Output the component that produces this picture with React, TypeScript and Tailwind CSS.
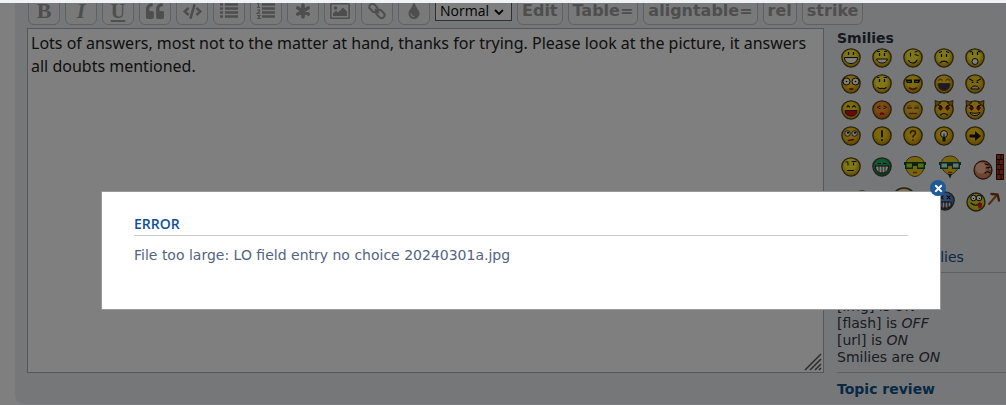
import { useState, type ReactNode } from "react";
import { FaCode, FaQuoteLeft, FaTint, FaTimes } from "react-icons/fa";

const INK = "#1c1400";

// Toolbar glyphs with heavier strokes than the icon package offers.
function ListIcon({ ordered = false }: { ordered?: boolean }) {
  return (
    <svg viewBox="0 0 20 18" className="h-[18px] w-5" fill="none" stroke="currentColor" aria-hidden>
      <path d="M6 2.500h13M6 6.500h13M6 10.500h13M6 14.500h13" strokeWidth="2.500" />
      {ordered ? (
        <path d="M1 1.500h1.500v4M1 5.500h3M1 8h2.500v1.500L1 11.500h3M1 13.500h3l-1.500 1.500 1.500 1.500H1" strokeWidth="1.200" />
      ) : (
        <path d="M1 2.500h3M1 6.500h3M1 10.500h3M1 14.500h3" strokeWidth="2.500" />
      )}
    </svg>
  );
}

function AsteriskIcon() {
  return (
    <svg viewBox="0 0 16 16" className="h-4 w-4" aria-hidden>
      <path d="M8 2v12M2.800 5l10.400 6M13.200 5L2.800 11" stroke="currentColor" strokeWidth="3.600" strokeLinecap="round" />
    </svg>
  );
}

function PictureIcon() {
  return (
    <svg viewBox="0 0 20 16" className="h-4 w-5" aria-hidden>
      <rect x=".8" y=".8" width="18.400" height="14.400" rx=".8" fill="none" stroke="currentColor" strokeWidth="1.500" />
      <circle cx="5.500" cy="5" r="1.800" fill="currentColor" />
      <path d="M3 13v-2.500l3-3 2 2 5-5 4 4V13Z" fill="currentColor" />
    </svg>
  );
}

function ChainIcon() {
  return (
    <svg viewBox="0 0 18 18" className="h-[18px] w-[18px]" fill="none" stroke="currentColor" strokeWidth="2" aria-hidden>
      <rect x="1" y="3" width="9" height="6" rx="3" transform="rotate(45 5.500 6)" />
      <rect x="8" y="9" width="9" height="6" rx="3" transform="rotate(45 12.500 12)" />
      <path d="M7 7l4 4" />
    </svg>
  );
}

const FORMAT_BUTTONS: { label: string; icon: ReactNode }[] = [
  { label: "Bold", icon: <span className="font-['Liberation_Serif',serif] text-[22px] font-bold">B</span> },
  { label: "Italic", icon: <span className="font-['Liberation_Serif',serif] text-[22px] font-bold italic">I</span> },
  { label: "Underline", icon: <span className="font-['Liberation_Serif',serif] text-xl font-bold underline underline-offset-2">U</span> },
  { label: "Quote", icon: <FaQuoteLeft size={18} /> },
  { label: "Code", icon: <FaCode size={19} /> },
  { label: "List", icon: <ListIcon /> },
  { label: "Ordered list", icon: <ListIcon ordered /> },
  { label: "List item", icon: <AsteriskIcon /> },
  { label: "Image", icon: <PictureIcon /> },
  { label: "Link", icon: <ChainIcon /> },
  { label: "Font colour", icon: <FaTint size={16} /> }
];

const CUSTOM_TAGS = ["Edit", "Table=", "aligntable=", "rel", "strike"];

// Every face shares the same head; the children are its features.
function Face({
  from = "#fff030",
  to = "#b98a00",
  size = "h-5 w-5",
  label,
  children
}: {
  from?: string;
  to?: string;
  size?: string;
  label: string;
  children?: ReactNode;
}) {
  const id = `head-${label}`;
  return (
    <svg viewBox="0 0 20 20" className={size} role="img" aria-label={label}>
      <defs>
        <radialGradient id={id} cx="46%" cy="38%" r="62%">
          <stop offset="0.450" stopColor={from} />
          <stop offset="1" stopColor={to} />
        </radialGradient>
      </defs>
      <path
        d="M10 .8C15 .8 19.200 4.300 19.200 9.200C19.200 14.500 14.600 19.200 10 19.200C5.400 19.200 .8 14.500 .8 9.200C.8 4.300 5 .8 10 .8Z"
        fill={`url(#${id})`}
        stroke="#54431c"
        strokeWidth="1.300"
      />
      {children}
    </svg>
  );
}

function Eyes({ y = 5 }: { y?: number }) {
  return (
    <path d={`M7.500 ${y}v3M12.500 ${y}v3`} stroke={INK} strokeWidth="1.300" fill="none" />
  );
}

function Stroke({ d, color = INK, width = 1.1 }: { d: string; color?: string; width?: number }) {
  return <path d={d} stroke={color} strokeWidth={width} fill="none" strokeLinecap="round" />;
}

function Horns() {
  return <path d="M1 .5l6 2-5.500 4ZM19 .5l-6 2 5.500 4Z" fill="#b98310" stroke={INK} strokeWidth=".7" />;
}

function RedEyes() {
  return (
    <>
      <path d="M6.500 5.500l2 2.500-2 2.500-2-2.500ZM13.500 5.500l2 2.500-2 2.500-2-2.500Z" fill="#c00000" stroke="#500" strokeWidth=".7" />
      <Stroke d="M4.500 5l3 1.500M15.500 5l-3 1.500" />
    </>
  );
}

const SMILEY_ROWS: ReactNode[][] = [
  [
    <Face key="a" label="very-happy">
      <Eyes y={4} />
      <path d="M3.500 9.500h13c0 4-3 6-6.500 6s-6.500-2-6.500-6Z" fill="#fff" stroke={INK} />
    </Face>,
    <Face key="b" label="smile">
      <Eyes />
      <Stroke d="M5.500 3.500h2M12.500 3.500h2" />
      <path d="M4.500 11h11c-1 3-3 4-5.500 4S5.500 14 4.500 11Z" fill="#fff" stroke={INK} />
    </Face>,
    <Face key="c" label="wink">
      <Stroke d="M7.500 5v3M12 6.500l3 1M5.500 12.500c2 3.500 7 3.500 8.500-.5M12 4l2-.5" />
    </Face>,
    <Face key="d" label="sad">
      <Eyes y={6} />
      <Stroke d="M5.500 4.500l2-1M14.500 4.500l-2-1M6 15c2-2.500 6-2.500 8 0" />
    </Face>,
    <Face key="e" label="surprised">
      <Eyes y={4} />
      <Stroke d="M5 4l2-1M15 4l-2-1" />
      <circle cx="10" cy="13.500" r="3" fill="#fff" stroke={INK} />
    </Face>
  ],
  [
    <Face key="a" label="shock" from="#f5cf20">
      <circle cx="5.500" cy="7.500" r="3.500" fill="#fff" stroke={INK} />
      <circle cx="14.500" cy="7.500" r="3.500" fill="#fff" stroke={INK} />
      <circle cx="5.500" cy="7.500" r=".8" />
      <circle cx="14.500" cy="7.500" r=".8" />
      <Stroke d="M9 15h2.500" color="#c01800" width={1.8} />
    </Face>,
    <Face key="b" label="confused">
      <Eyes />
      <Stroke d="M5.500 3.500h1.500M12 3.500h2.500M6 13.500c2 2.500 3 0 5 1s2-.5 3-1" />
    </Face>,
    <Face key="c" label="cool" from="#f5d820">
      <path d="M2.500 5.500h6.500v3.500H4ZM11 5.500h6.500L16 9h-5Z" fill={INK} />
      <Stroke d="M5 7.500h2M12.500 7.500h2" color="#eee" width={0.5} />
      <Stroke d="M6.500 14c2 1.500 5 1.500 7 0" color="#a02000" width={1.6} />
    </Face>,
    <Face key="d" label="laughing" from="#f5cc28">
      <Stroke d="M4.500 6.500c1-2 3-2 3.500 0M12 6.500c1-2 3-2 3.500 0" color="#8a5a10" />
      <path d="M4 9.500h12c0 5-3 7-6 7s-6-2-6-7Z" fill="#3b3550" stroke="#6a4a10" />
    </Face>,
    <Face key="e" label="mad" from="#f5d020">
      <Stroke d="M4.500 5l3.500 2M15.500 5L12 7M7 8.500h1M12 8.500h1" />
      <path d="M6 15c0-4 8-4 8 0Z" fill="#ddd" stroke={INK} />
    </Face>
  ],
  [
    <Face key="a" label="razz" from="#f8d820">
      <Stroke d="M6 7l1-1.500L8.500 7M11.500 7l1.500-1.500L14.500 7" />
      <path d="M4 10.500h12c0 4-3 5.500-6 5.500s-6-1.500-6-5.500Z" fill="#d81010" stroke={INK} strokeWidth=".8" />
    </Face>,
    <Face key="b" label="embarrassed" from="#f8982c" to="#b86010">
      <Stroke d="M5.500 7.500L8 6M14.500 7.500L12 6M7 8.500h1M12 8.500h1" color="#5a2000" />
      <Stroke d="M8.500 14c1-1 2-1 3 0" color="#c01000" width={1.8} />
    </Face>,
    <Face key="c" label="crying" from="#eec02c">
      <Stroke d="M4.500 8h4M11.500 8h4M6.500 13.500h7" color="#9a4010" width={1.4} />
      <Stroke d="M4.500 6h3.500M12 6h3.500" color="#a08020" />
    </Face>,
    <Face key="d" label="evil" from="#f5cc20">
      <Horns />
      <RedEyes />
      <Stroke d="M6.500 15c2-2 5-2 7 0" />
    </Face>,
    <Face key="e" label="twisted" from="#f5cc20">
      <Horns />
      <RedEyes />
      <path d="M5 12.500c2 1 8 1 10 0-1 4-9 4-10 0Z" fill="#eee" stroke={INK} />
    </Face>
  ],
  [
    <Face key="a" label="rolling-eyes" from="#f5cc20">
      <circle cx="6.500" cy="7.500" r="2.800" fill="#eee" stroke="#4a3a20" />
      <circle cx="13.500" cy="7.500" r="2.800" fill="#eee" stroke="#4a3a20" />
      <circle cx="7" cy="6.800" r="1" />
      <circle cx="14" cy="6.800" r="1" />
      <Stroke d="M7.500 14.500c2-1 3 0 5-1" color="#a02000" width={1.4} />
    </Face>,
    <Face key="b" label="exclamation" from="#f8cc10">
      <Stroke d="M10 5v5.500M10 13.800v.4" width={1.8} />
    </Face>,
    <Face key="c" label="question" from="#f8cc10">
      <Stroke d="M7.500 7c0-3 5.500-3 5 0c0 2-2.500 2-2.500 4M10 14v.3" color="#5a3000" width={1.6} />
    </Face>,
    <Face key="d" label="idea" from="#f8cc10">
      <circle cx="10" cy="8" r="3.500" fill="#fff" stroke={INK} />
      <path d="M8.500 11.500h3v4h-3Z" fill={INK} />
      <Stroke d="M10 8v3" />
    </Face>,
    <Face key="e" label="arrow" from="#f8cc10">
      <path d="M4.500 8.500h5.500V5l6 5-6 5v-3.500H4.500Z" fill={INK} />
    </Face>
  ]
];

function GreenFace() {
  return (
    <Face label="mr-green" from="#1fb070" to="#0b6c42">
      <Stroke d="M6 6.500h2.500M11.500 6.500H14" />
      <path d="M3.500 9h13c0 5-3 7-6.500 7s-6.500-2-6.500-7Z" fill="#fff" stroke={INK} />
      <Stroke d="M7 9.500v5M10 9.500v6M13 9.500v5" width={0.8} />
    </Face>
  );
}

function GlassesFace({ beard = false }: { beard?: boolean }) {
  return (
    <svg viewBox="0 0 24 24" className="h-6 w-6" role="img" aria-label={beard ? "uber geek" : "geek"}>
      <path
        d={beard ? "M12 1c6 0 9 4 9 9 0 4-5 9-9 10-4-1-9-6-9-10 0-5 3-9 9-9Z" : "M12 1.500c6 0 9.500 4 9.500 9S17 21.500 12 21.500 2.500 16 2.500 10.500 6 1.500 12 1.500Z"}
        fill="#eec820"
        stroke="#6a5418"
      />
      <path
        d="M1 7h22v3h-1v4h-8v-3h-4v3H2v-4H1Z"
        fill={beard ? "#0c5440" : "#164818"}
      />
      <path d="M3.500 8.500h5.500v4H3.500ZM15 8.500h5.500v4h-5.500Z" fill={beard ? "#cfe8e8" : "#9ae030"} />
      <Stroke d="M10.500 17.500h3" color="#b04000" width={1.4} />
      {beard && <path d="M10 19h4l-2 4.500Z" fill="#222a3a" />}
    </svg>
  );
}

function WallFace() {
  return (
    <svg viewBox="0 0 31 26" className="h-[26px] w-[31px]" role="img" aria-label="brick wall">
      <circle cx="10" cy="16" r="9" fill="#e08860" stroke="#5a2a18" strokeWidth="1.300" />
      <circle cx="8" cy="14" r="5.500" fill="#ffbe98" />
      <Stroke d="M12 10l4 1M13 14l4-1M12 19c2-2 4-1 5 0" />
      <path d="M15 14.500l3-1v4Z" fill="#fff" stroke={INK} strokeWidth=".6" />
      <path d="M23.500 .5h7v25h-7Z" fill="#c43018" stroke={INK} />
      <path d="M23 5.500h7M23 10.500h7M23 15.500h7M23 20.500h7M28 0v5M26 5v5M28 10v5M26 15v5M28 20v6" stroke={INK} fill="none" />
    </svg>
  );
}

function BlueFace() {
  return (
    <Face label="dazed" from="#5a9af0" to="#2858b0">
      <Stroke d="M5 5l3 3M8 5L5 8M12 5l3 3M15 5l-3 3" />
      <path d="M4 11h12v4l-3 2H7l-3-2Z" fill="#dde8ff" stroke={INK} />
      <Stroke d="M7 11v5M10 11v6M13 11v5" />
    </Face>
  );
}

function PickFace() {
  return (
    <svg viewBox="0 0 35 24" className="h-6 w-[35px]" role="img" aria-label="pickaxe">
      <circle cx="11" cy="13" r="9" fill="#d8d028" stroke="#4a4010" strokeWidth="1.400" />
      <circle cx="8.500" cy="9" r="2.800" fill="#fff" stroke={INK} />
      <circle cx="14" cy="9" r="2.800" fill="#fff" stroke={INK} />
      <path d="M8 9h1v1H8ZM14 9h1v1h-1Z" />
      <Stroke d="M6 14c3 3 6 3 9 0" />
      <path d="M12 15l5-1v4l-3 2Z" fill="#e02010" />
      <Stroke d="M24 15L32 6" color="#a85a20" width={2} />
      <Stroke d="M26.500 5l6 .5 1.500 6" color="#7c3c14" width={2.4} />
    </svg>
  );
}

function Status({ name, value }: { name: string; value: string }) {
  return (
    <p>
      {name} <em>{value}</em>
    </p>
  );
}

function Toolbar() {
  return (
    <div className="flex h-[22px] items-end gap-[5px] overflow-hidden pl-px text-[#9c9c9c]">
      {FORMAT_BUTTONS.map(({ label, icon }) => (
        <button
          key={label}
          type="button"
          aria-label={label}
          className="flex h-7 w-8 shrink-0 items-center justify-center rounded-md border border-[#c0c2c4] bg-[#f2f3f4] leading-none"
        >
          {icon}
        </button>
      ))}
      <div className="relative mb-1 shrink-0">
        <select
          aria-label="Font size"
          defaultValue="Normal"
          className="block h-5 w-[77px] appearance-none border border-[#606060] bg-white pl-1 font-['Open_Sans',sans-serif] text-sm leading-none text-black"
        >
          <option>Tiny</option>
          <option>Small</option>
          <option>Normal</option>
          <option>Large</option>
        </select>
        <svg viewBox="0 0 10 6" className="pointer-events-none absolute top-2 right-2 h-1.5 w-2.5" aria-hidden>
          <path d="M1 1l4 4 4-4" fill="none" stroke="#000" strokeWidth="1.800" />
        </svg>
      </div>
      {CUSTOM_TAGS.map((tag) => (
        <button
          key={tag}
          type="button"
          className="flex h-7 shrink-0 items-center rounded-md border border-[#c0c2c4] bg-[#f2f3f4] px-1 text-base leading-4 font-bold"
        >
          {tag}
        </button>
      ))}
    </div>
  );
}

function Sidebar() {
  return (
    <aside className="w-[169px] shrink-0 text-sm leading-[17px] text-[#333a44]">
      <h3 className="pt-0.5 font-bold text-[#28313f]">Smilies</h3>
      <div className="mt-px ml-1 flex flex-col gap-1.5">
        {SMILEY_ROWS.map((row, i) => (
          <div key={i} className="flex gap-[11px]">
            {row}
          </div>
        ))}
      </div>
      <div className="mt-2 ml-1 flex items-center gap-[11px]">
        <Face label="neutral">
          <Stroke d="M7 6v2M12.500 6v2M5 5h2M11 4.500h4M6.500 13.500h6" />
        </Face>
        <GreenFace />
        <GlassesFace />
        <GlassesFace beard />
        <WallFace />
      </div>
      <div className="mt-[7px] ml-3.5 flex h-7 items-center gap-[19px]">
        <Face label="ninja" size="h-[22px] w-[22px]" from="#444" to="#111" />
        <Face label="angel" size="h-6 w-6 self-start" from="#f4eeb0" to="#d8cc70" />
        <div className="flex items-center gap-2.5">
          <BlueFace />
          <PickFace />
        </div>
      </div>
      <p className="mt-[34px]">
        <a href="#smilies" className="text-[#105289]">View more smilies</a>
      </p>
      <hr className="mt-1.5 mb-2 border-[#bcbec2]" />
      <Status name="BBCode is" value="ON" />
      <Status name="[img] is" value="ON" />
      <Status name="[flash] is" value="OFF" />
      <Status name="[url] is" value="ON" />
      <Status name="Smilies are" value="ON" />
      <hr className="mt-1.5 mb-2 border-[#bcbec2]" />
      <a href="#review" className="font-bold text-[#105289]">Topic review</a>
    </aside>
  );
}

function ErrorDialog({ onClose }: { onClose: () => void }) {
  return (
    <div className="fixed inset-x-0 top-[3px] bottom-0 bg-black/50">
      <div
        role="alertdialog"
        aria-labelledby="error-title"
        aria-describedby="error-text"
        className="absolute top-[188px] right-[65px] left-[101px] border border-[#999] bg-white px-8 pt-[23px] pb-11"
      >
        <button
          type="button"
          aria-label="Close"
          onClick={onClose}
          className="absolute -top-3 -right-1.5 flex h-4 w-4 items-center justify-center rounded-full bg-[#1d5a96] text-white"
        >
          <FaTimes size={11} />
        </button>
        <h2
          id="error-title"
          className="border-b border-[#ccc] pb-0.5 font-['Open_Sans',sans-serif] text-sm leading-[18px] font-semibold text-[#115098]"
        >
          ERROR
        </h2>
        <p id="error-text" className="mt-[9px] text-sm leading-5 text-[#536482]">
          File too large: LO field entry no choice 20240301a.jpg
        </p>
      </div>
    </div>
  );
}

export default function App() {
  const [open, setOpen] = useState(true);
  return (
    <div className="h-screen overflow-hidden bg-white font-['DejaVu_Sans',sans-serif]">
      <div className="h-[3px] bg-[#f0f2f5]" />
      <main className="ml-[15px] rounded-bl-lg bg-[#eceff3] pb-1.5 pl-3">
        <Toolbar />
        <div className="flex items-start gap-[13px] pt-[3px]">
          <div className="relative flex min-w-0 flex-1">
            <textarea
              aria-label="Message"
              className="h-[345px] w-full resize-none border border-[#a9afb8] bg-white px-[3px] py-[3px] font-['Noto_Sans',sans-serif] text-base leading-[23px] text-[#222]"
              defaultValue="Lots of answers, most not to the matter at hand, thanks for trying. Please look at the picture, it answers all doubts mentioned."
            />
            <svg viewBox="0 0 18 18" className="pointer-events-none absolute right-0.5 bottom-0.5 h-[18px] w-[18px]" aria-hidden>
              <path d="M1 17L17 1M6 17L17 6M11 17l6-6M15 17l2-2" stroke="#555" strokeWidth="1.500" fill="none" />
            </svg>
          </div>
          <Sidebar />
        </div>
      </main>
      {open && <ErrorDialog onClose={() => setOpen(false)} />}
    </div>
  );
}
